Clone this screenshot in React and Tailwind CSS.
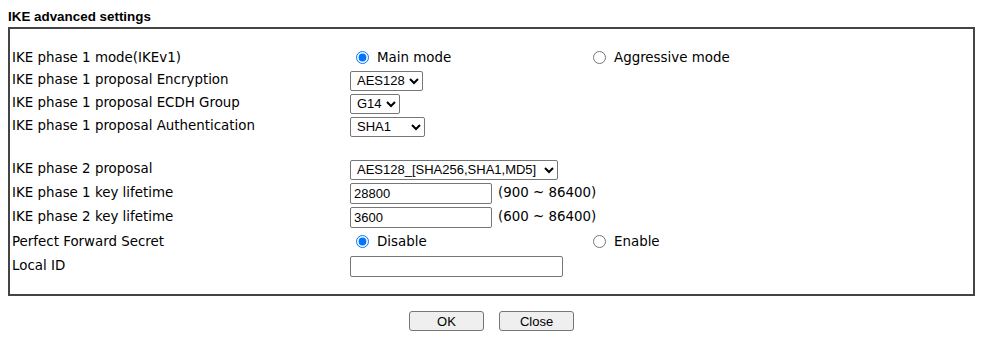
import { useState } from 'react';

const verdana = { fontFamily: '"DejaVu Sans", Verdana, sans-serif' };

function Row({ label, h, children }) {
    return (
        <div className={`flex items-center ${h}`}>
            <div className="w-[338px] shrink-0">{label}</div>
            <div className="flex items-center">{children}</div>
        </div>
    );
}

function Radio({ name, label, checked, onChange, width }) {
    return (
        <label className={`flex items-center ${width}`}>
            <input
                type="radio"
                name={name}
                checked={checked}
                onChange={onChange}
                className="w-[13px] h-[13px] ml-[6px] mr-[8px]"
            />
            <span>{label}</span>
        </label>
    );
}

function Select({ value, options, width }) {
    return (
        <select
            defaultValue={value}
            className={`h-[20px] ${width} border border-[#767676] rounded-[2px] bg-white pl-[2px] text-[13px] text-black font-['Liberation_Sans',Arial,sans-serif]`}
        >
            {options.map((o) => (
                <option key={o}>{o}</option>
            ))}
        </select>
    );
}

export default function App() {
    const [mode, setMode] = useState('main');
    const [pfs, setPfs] = useState('disable');

    return (
        <div className="w-[993px] h-[348px] bg-white px-[8px] pt-[9px] text-black">
            <h3 className="text-[13.4px] font-bold leading-[16px] font-['Liberation_Sans',Arial,sans-serif]">
                IKE advanced settings
            </h3>
            <div className="mt-[2px] w-[967px] h-[269px] border-2 border-[#444] pl-[2px] pt-[18px] text-[13.4px]" style={verdana}>
                <Row label="IKE phase 1 mode(IKEv1)" h="h-[22px]">
                    <Radio name="mode" label="Main mode" width="w-[237px]" checked={mode === 'main'} onChange={() => setMode('main')} />
                    <Radio name="mode" label="Aggressive mode" checked={mode === 'aggr'} onChange={() => setMode('aggr')} />
                </Row>
                <Row label="IKE phase 1 proposal Encryption" h="h-[23px]">
                    <Select value="AES128" options={['DES', '3DES', 'AES128', 'AES192', 'AES256']} width="w-[73px]" />
                </Row>
                <Row label="IKE phase 1 proposal ECDH Group" h="h-[23px]">
                    <Select value="G14" options={['G1', 'G2', 'G5', 'G14', 'G15']} width="w-[50px]" />
                </Row>
                <Row label="IKE phase 1 proposal Authentication" h="h-[23px]">
                    <Select value="SHA1" options={['MD5', 'SHA1', 'SHA256']} width="w-[75px]" />
                </Row>
                <div className="h-[20px]" />
                <Row label="IKE phase 2 proposal" h="h-[23px]">
                    <Select value="AES128_[SHA256,SHA1,MD5]" options={['AES128_[SHA256,SHA1,MD5]', 'AES256_[SHA256,SHA1,MD5]']} width="w-[208px]" />
                </Row>
                <Row label="IKE phase 1 key lifetime" h="h-[24px]">
                    <input defaultValue="28800" className="w-[142px] h-[21px] border border-[#767676] rounded-[2px] px-[3px] text-[13px] font-['Liberation_Sans',Arial,sans-serif]" />
                    <span className="ml-[6px]">(900 ~ 86400)</span>
                </Row>
                <Row label="IKE phase 2 key lifetime" h="h-[24px]">
                    <input defaultValue="3600" className="w-[142px] h-[21px] border border-[#767676] rounded-[2px] px-[3px] text-[13px] font-['Liberation_Sans',Arial,sans-serif]" />
                    <span className="ml-[6px]">(600 ~ 86400)</span>
                </Row>
                <Row label="Perfect Forward Secret" h="h-[26px]">
                    <Radio name="pfs" label="Disable" width="w-[237px]" checked={pfs === 'disable'} onChange={() => setPfs('disable')} />
                    <Radio name="pfs" label="Enable" checked={pfs === 'enable'} onChange={() => setPfs('enable')} />
                </Row>
                <Row label="Local ID" h="h-[22px]">
                    <input className="w-[213px] h-[21px] border border-[#767676] rounded-[2px] px-[3px] text-[13px] font-['Liberation_Sans',Arial,sans-serif]" />
                </Row>
            </div>
            <div className="flex justify-center gap-[15px] mt-[15px] pr-[10px] text-[13px] font-['Liberation_Sans',Arial,sans-serif]">
                <button className="w-[75px] h-[20px] bg-[#efefef] border border-[#767676] rounded-[3px]">OK</button>
                <button className="w-[75px] h-[20px] bg-[#efefef] border border-[#767676] rounded-[3px]">Close</button>
            </div>
        </div>
    );
}
